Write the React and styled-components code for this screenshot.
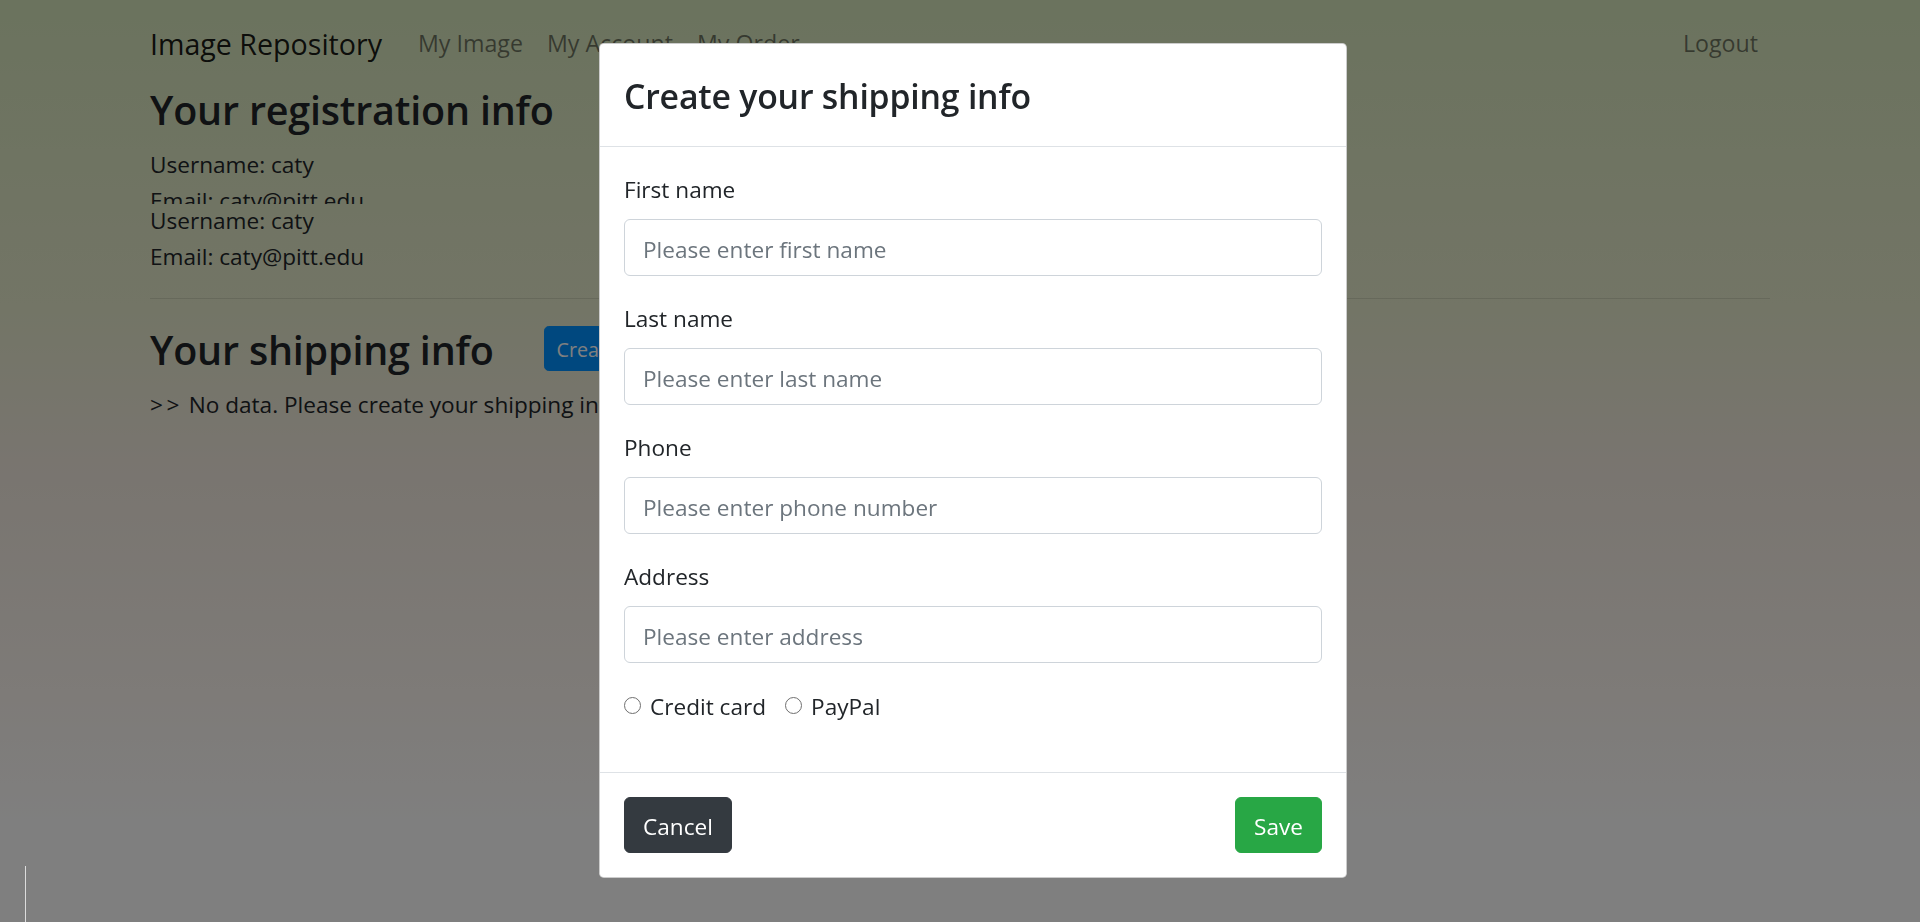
import React from 'react';
import styled, { createGlobalStyle } from 'styled-components';

const GlobalStyle = createGlobalStyle`
  html, body { margin: 0; padding: 0; height: 100%; }
  body {
    font-family: "Open Sans", "Noto Sans", "Liberation Sans", Arial, sans-serif;
    color: #212529;
    -webkit-font-smoothing: antialiased;
  }
  *, *::before, *::after { box-sizing: border-box; }
`;

const Page = styled.div`
  min-height: 100vh;
  padding: 0 150px;
  font-size: 22.6px;
  line-height: 36px;
  background: linear-gradient(
    180deg,
    #d6e6bc 0%,
    #e6eacc 33%,
    #f2eadf 50%,
    #fcf6f0 75%,
    #ffffff 90%
  );
`;

const Navbar = styled.nav`
  height: 84px;
  display: flex;
  align-items: center;
`;

const Brand = styled.a`
  font-size: 28.6px;
  line-height: 43px;
  padding: 6.7px 0 4.7px;
  margin-right: 24px;
  color: rgba(0, 0, 0, 0.9);
  text-decoration: none;
`;

const NavLink = styled.a`
  padding: 14px 12px 12px;
  font-size: 23.2px;
  line-height: 34px;
  color: rgba(0, 0, 0, 0.5);
  text-decoration: none;
  margin-left: ${(p) => (p.$right ? 'auto' : '0')};
`;

const Heading = styled.h3`
  margin: 0 0 ${(p) => p.$mb}px;
  padding-top: ${(p) => p.$pt}px;
  font-size: 39.5px;
  line-height: ${(p) => 50.4 - p.$pt}px;
  font-weight: 600;
  letter-spacing: -0.2px;
`;

const InfoBlock = styled.div`
  height: ${(p) => p.$h}px;
  overflow: hidden;
  margin-top: ${(p) => p.$mt}px;
`;

const InfoLine = styled.div`
  padding-top: 2px;
  line-height: 34px;
`;

const Prefix = styled.span`
  letter-spacing: 3.5px;
`;

const Rule = styled.hr`
  margin: 24px 0;
  border: 0;
  border-top: 1px solid rgba(0, 0, 0, 0.1);
`;

const SectionHeader = styled.div`
  display: flex;
  align-items: center;
  height: 50.4px;
  margin-bottom: 12.4px;
`;

const SmallButton = styled.button`
  margin-left: 50px;
  font-family: inherit;
  font-size: 19.7px;
  line-height: 31.5px;
  padding: 7px 12px 5px;
  border-radius: 4.8px;
  border: 1px solid #0090ff;
  background: #0090ff;
  color: #fff;
  white-space: nowrap;
`;

const Backdrop = styled.div`
  position: fixed;
  inset: 0;
  background: rgba(0, 0, 0, 0.5);
`;

const Dialog = styled.div`
  width: 748px;
  margin: 43px 0 0 599px;
  background: #fff;
  border: 1px solid rgba(0, 0, 0, 0.2);
  border-radius: 4.8px;
  font-size: 22.6px;
  line-height: 36px;
  color: #212529;
`;

const DialogHeader = styled.div`
  padding: 24px;
  border-bottom: 1px solid #dee2e6;
`;

const DialogTitle = styled.h4`
  margin: 0;
  padding-top: 2px;
  font-size: 33.8px;
  line-height: 52px;
  font-weight: 600;
  letter-spacing: -0.2px;
`;

const DialogBody = styled.div`
  padding: 24px;
`;

const FormGroup = styled.div`
  margin-bottom: 24px;
`;

const Label = styled.label`
  display: block;
  margin-bottom: 12px;
  padding-top: 2px;
  line-height: 34px;
`;

const TextInput = styled.input`
  display: block;
  width: 100%;
  height: 57px;
  padding: 10.5px 18px 7.5px;
  font-family: inherit;
  font-size: 22.6px;
  line-height: 36px;
  color: #495057;
  background: #fff;
  border: 1px solid #ced4da;
  border-radius: 6px;
  outline: none;
  &::placeholder { color: #6c757d; opacity: 1; }
`;

const RadioRow = styled.div`
  display: flex;
  align-items: center;
  height: 36px;
  margin-bottom: 25px;
`;

const RadioOption = styled.label`
  display: flex;
  align-items: center;
  margin-right: 19px;
`;

const RadioText = styled.span`
  padding-top: 4px;
`;

const Radio = styled.input`
  appearance: none;
  -webkit-appearance: none;
  width: 17px;
  height: 17px;
  margin: 0 9px 0 0;
  border: 1px solid #6f6f6f;
  border-radius: 50%;
  background: #fff;
`;

const DialogFooter = styled.div`
  display: flex;
  justify-content: space-between;
  align-items: center;
  padding: 18px;
  border-top: 1px solid #dee2e6;
`;

const Button = styled.button`
  margin: 6px;
  padding: 11px 18px 7px;
  font-family: inherit;
  font-size: 22.6px;
  line-height: 36px;
  border-radius: 6px;
  color: #fff;
  background: ${(p) => p.$bg};
  border: 1px solid ${(p) => p.$bg};
`;

const CaretLine = styled.div`
  position: fixed;
  left: 25px;
  bottom: 0;
  width: 1px;
  height: 56px;
  background: #dcdcdc;
`;

export default function App() {
  return (
    <>
      <GlobalStyle />
      <Page>
        <Navbar>
          <Brand href="#">Image Repository</Brand>
          <NavLink href="#">My Image</NavLink>
          <NavLink href="#">My Account</NavLink>
          <NavLink href="#">My Order</NavLink>
          <NavLink href="#" $right>Logout</NavLink>
        </Navbar>
        <Heading $mb={12} $pt={2}>Your registration info</Heading>
        <InfoBlock $h={58} $mt={0}>
          <InfoLine>Username: caty</InfoLine>
          <InfoLine>Email: caty@pitt.edu</InfoLine>
        </InfoBlock>
        <InfoBlock $h={72} $mt={-2}>
          <InfoLine>Username: caty</InfoLine>
          <InfoLine>Email: caty@pitt.edu</InfoLine>
        </InfoBlock>
        <Rule />
        <SectionHeader>
          <Heading $mb={0} $pt={4}>Your shipping info</Heading>
          <SmallButton>Create shipping info</SmallButton>
        </SectionHeader>
        <InfoLine>
          <Prefix>&gt;&gt;</Prefix> No data. Please create your shipping info first.
        </InfoLine>
      </Page>
      <Backdrop>
        <Dialog>
          <DialogHeader>
            <DialogTitle>Create your shipping info</DialogTitle>
          </DialogHeader>
          <DialogBody>
            <FormGroup>
              <Label>First name</Label>
              <TextInput placeholder="Please enter first name" />
            </FormGroup>
            <FormGroup>
              <Label>Last name</Label>
              <TextInput placeholder="Please enter last name" />
            </FormGroup>
            <FormGroup>
              <Label>Phone</Label>
              <TextInput placeholder="Please enter phone number" />
            </FormGroup>
            <FormGroup>
              <Label>Address</Label>
              <TextInput placeholder="Please enter address" />
            </FormGroup>
            <RadioRow>
              <RadioOption>
                <Radio type="radio" name="pay" />
                <RadioText>Credit card</RadioText>
              </RadioOption>
              <RadioOption>
                <Radio type="radio" name="pay" />
                <RadioText>PayPal</RadioText>
              </RadioOption>
            </RadioRow>
          </DialogBody>
          <DialogFooter>
            <Button $bg="#343a40">Cancel</Button>
            <Button $bg="#28a745">Save</Button>
          </DialogFooter>
        </Dialog>
      </Backdrop>
      <CaretLine />
    </>
  );
}
